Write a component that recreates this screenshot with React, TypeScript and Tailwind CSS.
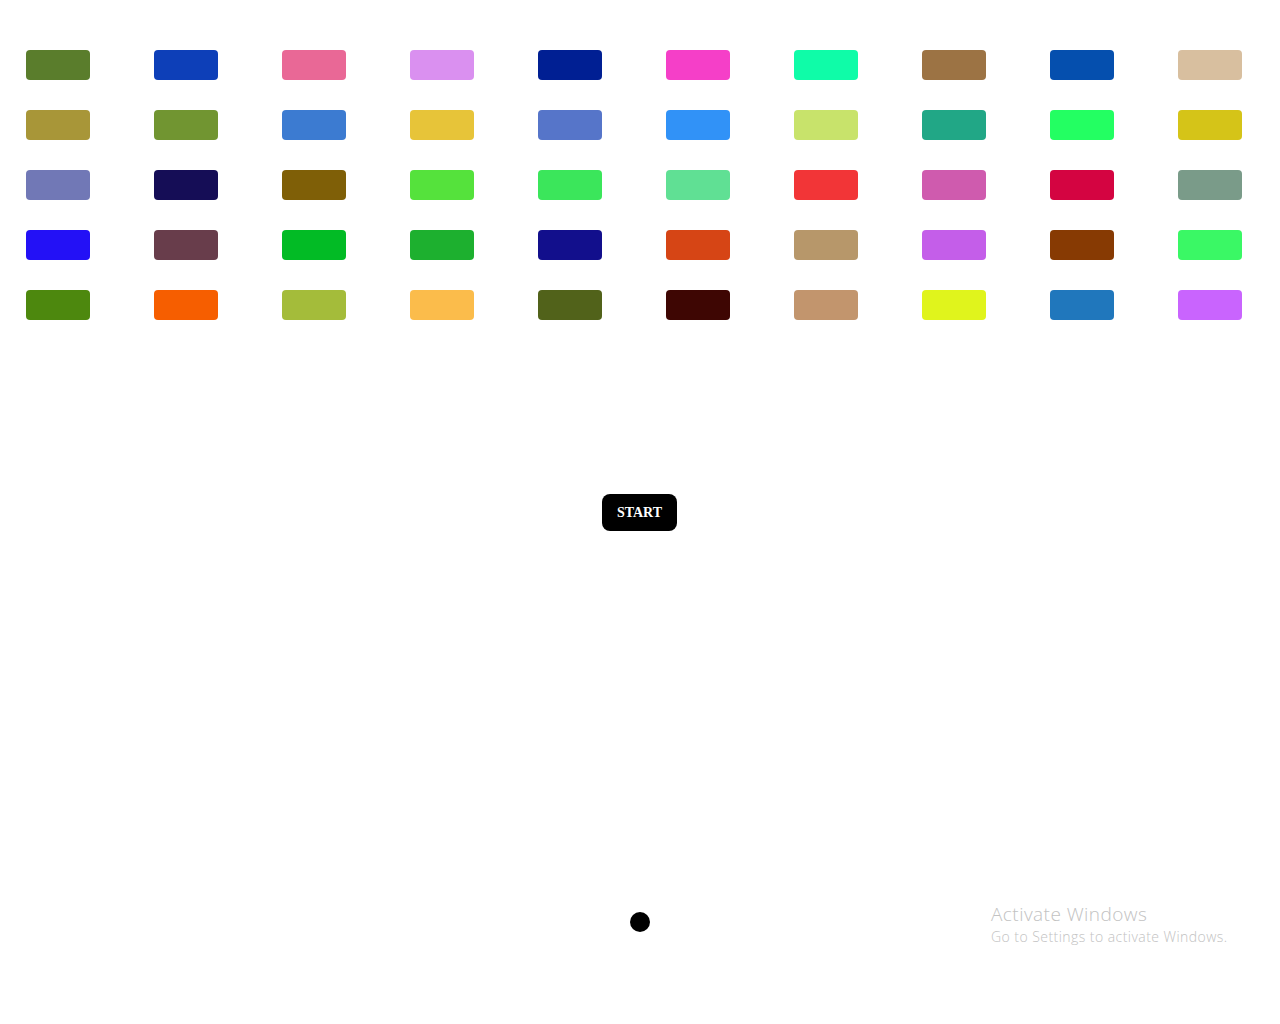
const rows: string[][] = [
  ["#5a7d2c", "#0d3fb8", "#e96896", "#da90f0", "#001f93", "#f53fc8", "#0ffca8", "#9c7344", "#054fae", "#d8bf9f"],
  ["#a89638", "#719531", "#3c7bd1", "#e7c439", "#5675c9", "#3192f7", "#c8e36b", "#21a786", "#23ff62", "#d5c418"],
  ["#7178b6", "#150d56", "#7f5f07", "#55e23c", "#3be65b", "#60e094", "#f23537", "#cf5bae", "#d40441", "#7a9b89"],
  ["#2311f6", "#683d4b", "#02bb25", "#1db02f", "#120f8c", "#d64515", "#b7976a", "#c45ee9", "#873a03", "#3af865"],
  ["#4d880e", "#f65e00", "#a4bc3a", "#fbbc4b", "#51621a", "#3e0603", "#c2956d", "#e0f41c", "#2077bc", "#c964fe"],
];

export default function App() {
  return (
    <div className="relative w-[1280px] h-[1024px] bg-white overflow-hidden">
      <div className="flex flex-col items-center pt-[50px]">
        <div className="self-start pl-[26px] grid grid-cols-[repeat(10,64px)] gap-x-[64px] gap-y-[30px]">
          {rows.flat().map((color, i) => (
            <div
              key={i}
              className="w-[64px] h-[30px] rounded-[4px]"
              style={{ backgroundColor: color }}
            />
          ))}
        </div>
        <button className="mt-[174px] -ml-px w-[75px] h-[37px] rounded-[8px] bg-black text-white font-bold text-[14px] font-['Liberation_Serif',serif] flex items-center justify-center">
          START
        </button>
        <div className="mt-[381px] w-[20px] h-[20px] rounded-full bg-black" />
      </div>
      <div className="absolute left-[991px] top-[905px] text-[#c2c2c2] font-['Open_Sans',sans-serif] leading-none">
        <div className="text-[19px] font-light tracking-[0.45px]">Activate Windows</div>
        <div className="mt-[6px] text-[14px] font-light tracking-[0.45px]">Go to Settings to activate Windows.</div>
      </div>
    </div>
  );
}
